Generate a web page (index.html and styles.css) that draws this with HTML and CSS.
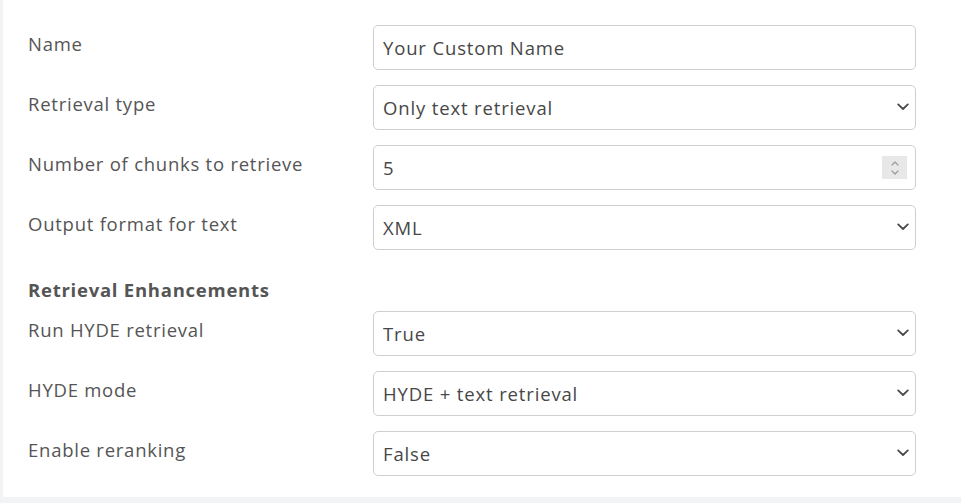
FILE: index.html
```html
<!DOCTYPE html>
<html lang="en">
<head>
<meta charset="utf-8">
<title>Retrieval settings</title>
<link rel="stylesheet" href="styles.css">
</head>
<body>
<div class="panel">
  <div class="group">
    <div class="row">
      <label class="label" for="f-name">Name</label>
      <div class="control"><input id="f-name" class="field" type="text" value="Your Custom Name"></div>
    </div>
    <div class="row">
      <label class="label" for="f-type">Retrieval type</label>
      <div class="control">
        <select id="f-type" class="field select"><option>Only text retrieval</option></select>
        <svg class="chev" viewBox="0 0 12 8" width="12" height="8"><path d="M1.2 1.4 L6 6 L10.8 1.4" fill="none" stroke="#4a4a4a" stroke-width="1.8" stroke-linecap="round" stroke-linejoin="round"/></svg>
      </div>
    </div>
    <div class="row">
      <label class="label" for="f-num">Number of chunks to retrieve</label>
      <div class="control">
        <input id="f-num" class="field number" type="number" value="5">
        <span class="spin">
          <svg viewBox="0 0 10 18" width="10" height="18"><path d="M2 6 L5 3 L8 6" fill="none" stroke="#9a9a9a" stroke-width="1.2" stroke-linecap="round" stroke-linejoin="round"/><path d="M2 12 L5 15 L8 12" fill="none" stroke="#9a9a9a" stroke-width="1.2" stroke-linecap="round" stroke-linejoin="round"/></svg>
        </span>
      </div>
    </div>
    <div class="row">
      <label class="label" for="f-fmt">Output format for text</label>
      <div class="control">
        <select id="f-fmt" class="field select"><option>XML</option></select>
        <svg class="chev" viewBox="0 0 12 8" width="12" height="8"><path d="M1.2 1.4 L6 6 L10.8 1.4" fill="none" stroke="#4a4a4a" stroke-width="1.8" stroke-linecap="round" stroke-linejoin="round"/></svg>
      </div>
    </div>
  </div>

  <h3 class="heading">Retrieval Enhancements</h3>

  <div class="group">
    <div class="row">
      <label class="label" for="f-hyde">Run HYDE retrieval</label>
      <div class="control">
        <select id="f-hyde" class="field select"><option>True</option></select>
        <svg class="chev" viewBox="0 0 12 8" width="12" height="8"><path d="M1.2 1.4 L6 6 L10.8 1.4" fill="none" stroke="#4a4a4a" stroke-width="1.8" stroke-linecap="round" stroke-linejoin="round"/></svg>
      </div>
    </div>
    <div class="row">
      <label class="label" for="f-mode">HYDE mode</label>
      <div class="control">
        <select id="f-mode" class="field select"><option>HYDE + text retrieval</option></select>
        <svg class="chev" viewBox="0 0 12 8" width="12" height="8"><path d="M1.2 1.4 L6 6 L10.8 1.4" fill="none" stroke="#4a4a4a" stroke-width="1.8" stroke-linecap="round" stroke-linejoin="round"/></svg>
      </div>
    </div>
    <div class="row">
      <label class="label" for="f-rr">Enable reranking</label>
      <div class="control">
        <select id="f-rr" class="field select"><option>False</option></select>
        <svg class="chev" viewBox="0 0 12 8" width="12" height="8"><path d="M1.2 1.4 L6 6 L10.8 1.4" fill="none" stroke="#4a4a4a" stroke-width="1.8" stroke-linecap="round" stroke-linejoin="round"/></svg>
      </div>
    </div>
  </div>
</div>
</body>
</html>
```

FILE: styles.css
```css
* { box-sizing: border-box; }

html, body {
  margin: 0;
  height: 100%;
}

body {
  background: #f2f3f5;
  font-family: "Open Sans", "Noto Sans", sans-serif;
  color: #555;
  overflow: hidden;
}

.panel {
  margin-left: 3px;
  height: 497px;
  background: #fff;
  padding: 25px 45px 0 25px;
}

.group {
  display: flex;
  flex-direction: column;
  gap: 15px;
}

.row {
  display: grid;
  grid-template-columns: 345px 1fr;
  align-items: start;
}

.label {
  font-size: 18.5px;
  letter-spacing: 0.75px;
  line-height: 26px;
  padding-top: 6px;
  color: #555;
}

.control {
  position: relative;
}

.field {
  display: block;
  width: 100%;
  height: 45px;
  margin: 0;
  border: 1px solid #cfcfcf;
  border-radius: 5px;
  background: #fff;
  padding: 0 9px;
  font-family: inherit;
  font-size: 18.5px;
  letter-spacing: 0.85px;
  color: #474747;
  outline: none;
}

.select {
  appearance: none;
  -webkit-appearance: none;
}

.number::-webkit-inner-spin-button,
.number::-webkit-outer-spin-button {
  -webkit-appearance: none;
  margin: 0;
}

.chev {
  position: absolute;
  right: 7px;
  top: 18px;
  pointer-events: none;
}

.spin {
  position: absolute;
  right: 9px;
  top: 11px;
  width: 25px;
  height: 23px;
  background: #e8e8e8;
  display: flex;
  align-items: center;
  justify-content: center;
}

.heading {
  margin: 26px 0 8px;
  font-size: 18.5px;
  letter-spacing: 0.75px;
  line-height: 27px;
  font-weight: 700;
  color: #555;
}
```
